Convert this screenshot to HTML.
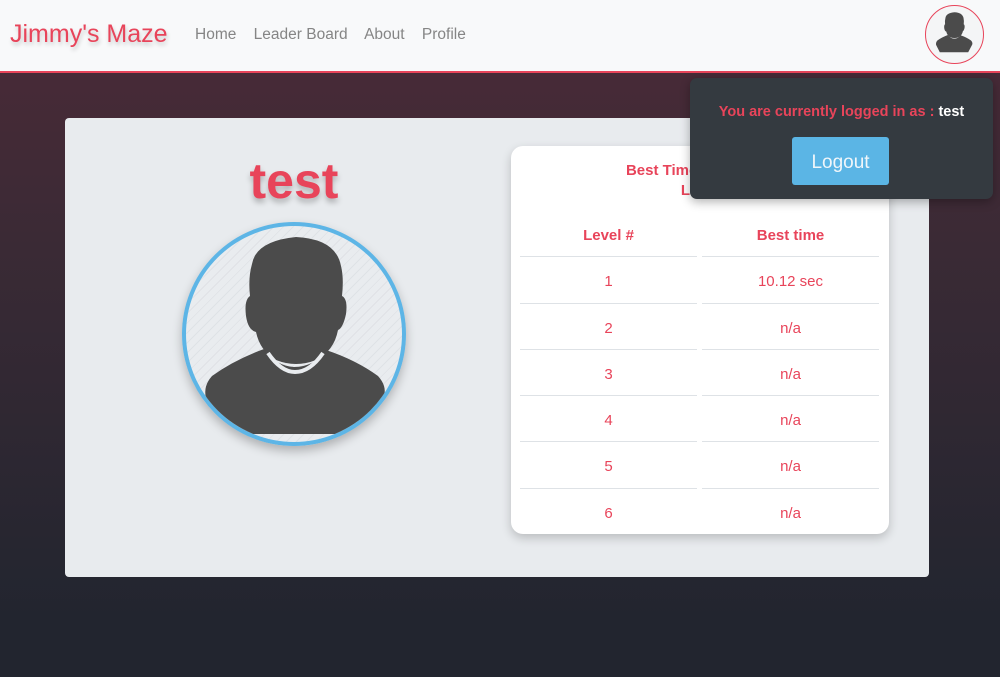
<!DOCTYPE html>
<html><head><style>
*{margin:0;padding:0;box-sizing:border-box}
body{width:1000px;height:677px;overflow:hidden;font-family:"Liberation Sans",sans-serif;background:linear-gradient(#472a37 72px,#3a2a35 250px,#22252f 620px,#22252f);position:relative}
.nav{position:absolute;left:0;top:0;width:1000px;height:73px;background:#f8f9fa;border-bottom:2px solid #e8445a}
.brand{position:absolute;left:10px;top:20px;font-size:25px;color:#e8445a;text-shadow:1px 3px 4px rgba(0,0,0,.2)}
.links{position:absolute;left:195px;top:26px;font-size:15.5px;color:#858585}
.links span{margin-right:13px}
.av{position:absolute;left:925px;top:5px;width:59px;height:59px;border:1.5px solid #e8445a;border-radius:50%;overflow:hidden;background:#f4f5f6}
.panel{position:absolute;left:65px;top:118px;width:864px;height:459px;background:#e8ebee;border-radius:4px}
.name{position:absolute;left:194px;width:200px;top:152px;text-align:center;font-size:50px;font-weight:bold;color:#e8445a;text-shadow:0 4px 6px rgba(0,0,0,.25)}
.big{position:absolute;left:182px;top:222px;width:224px;height:224px;border:4px solid #5db5e6;border-radius:50%;overflow:hidden;background:repeating-linear-gradient(135deg,#e9ecef 0 6px,#dfe2e6 6px 7px);box-shadow:0 5px 10px rgba(0,0,0,.25)}
.card{position:absolute;left:511px;top:146px;width:378px;height:388px;background:#fff;border-radius:12px;box-shadow:0 4px 10px rgba(0,0,0,.2);color:#e8445a}
.title{position:absolute;left:0;width:378px;top:15px;text-align:center;font-weight:bold;font-size:15px;line-height:20px}
.row{position:absolute;left:9px;width:360px;height:46px;font-size:15px}
.row div{position:absolute;top:0;width:177px;height:46px;line-height:50px;text-align:center;border-top:1px solid #dee2e6}
.row .a{left:0}.row .b{left:182px}
.pop{position:absolute;left:690px;top:78px;width:303px;height:121px;background:#343a40;border-radius:7px;box-shadow:0 3px 10px rgba(0,0,0,.3)}
.pop p{position:absolute;top:25px;width:303px;text-align:center;color:#e8445a;font-weight:bold;font-size:14.5px}
.btn{position:absolute;left:102px;top:59px;width:97px;height:48px;background:#5bb5e5;border-radius:3px;color:#f0f6fa;font-size:19px;line-height:52px;text-align:center}
</style></head><body>
<div class="nav">
<div class="brand">Jimmy's Maze</div>
<div class="links"><span>Home</span> <span>Leader Board</span> <span>About</span> <span>Profile</span></div>
<div class="av"><svg width="56" height="56" viewBox="-30 -20 276 276"><path d="M66 38 Q70 15 110 11 Q150 13 155 40 Q158 52 156 70 Q162 73 160 88 Q157 102 152 104 Q148 125 130 134 Q110 142 90 134 Q74 125 70 106 Q62 104 60 90 Q58 74 64 70 Q62 52 66 38Z" fill="#4b4b4b"/><path d="M78 123 Q90 140 108 141 Q128 141 140 124 Q170 134 192 150 Q201 160 198 170 L178 208 L38 208 L20 172 Q17 160 26 150 Q48 134 78 123Z" fill="#4b4b4b"/></svg></div>
</div>
<div class="panel"></div>
<div class="name">test</div>
<div class="big"><svg width="216" height="216" viewBox="0 0 216 216"><path d="M66 38 Q70 15 110 11 Q150 13 155 40 Q158 52 156 70 Q162 73 160 88 Q157 102 152 104 Q148 125 130 134 Q110 142 90 134 Q74 125 70 106 Q62 104 60 90 Q58 74 64 70 Q62 52 66 38Z" fill="#4b4b4b"/><path d="M78 123 Q90 140 108 141 Q128 141 140 124 Q170 134 192 150 Q201 160 198 170 L178 208 L38 208 L20 172 Q17 160 26 150 Q48 134 78 123Z" fill="#4b4b4b"/><path d="M82 127 Q95 146 109 146 Q124 146 137 127" fill="none" stroke="#e9ecef" stroke-width="4"/></svg></div>
<div class="card">
<div class="title">Best Times For Each<br>Level</div>
<div class="row" style="top:65px;font-weight:bold"><div class="a" style="border:none">Level #</div><div class="b" style="border:none">Best time</div></div>
<div class="row" style="top:110px"><div class="a">1</div><div class="b">10.12 sec</div></div>
<div class="row" style="top:157px"><div class="a">2</div><div class="b">n/a</div></div>
<div class="row" style="top:203px"><div class="a">3</div><div class="b">n/a</div></div>
<div class="row" style="top:249px"><div class="a">4</div><div class="b">n/a</div></div>
<div class="row" style="top:295px"><div class="a">5</div><div class="b">n/a</div></div>
<div class="row" style="top:342px"><div class="a">6</div><div class="b">n/a</div></div>
</div>
<div class="pop"><p style="top:26px">You are currently logged in as : <span style="color:#fff">test</span></p><div class="btn">Logout</div></div>
</body></html>
